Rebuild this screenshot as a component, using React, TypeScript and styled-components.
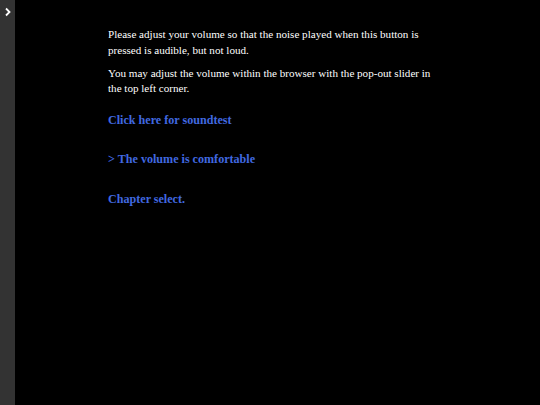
import styled, { createGlobalStyle } from "styled-components";

const GlobalStyle = createGlobalStyle`
  html, body {
    margin: 0;
    padding: 0;
    background: #000;
    height: 100%;
  }
  #root {
    height: 100%;
  }
`;

const Page = styled.div`
  display: flex;
  height: 405px;
  background: #000;
  overflow: hidden;
`;

const SideBar = styled.div`
  width: 15px;
  flex-shrink: 0;
  background: #333;
  display: flex;
  justify-content: center;
  padding-top: 3px;
  box-sizing: border-box;
`;

const Story = styled.div`
  flex: 1;
  display: flex;
  justify-content: center;
  padding-right: 15px;
`;

const Passage = styled.div`
  width: 324px;
  padding-top: 27px;
  font-family: "Liberation Serif", Georgia, serif;
  font-size: 11.1px;
  line-height: 15.5px;
  color: #fff;
`;

const Para = styled.p`
  margin: 0 0 7.5px;
`;

const Link = styled.a<{ $gap: number }>`
  display: block;
  margin-top: ${(p) => p.$gap}px;
  color: #4169e1;
  font-size: 12.1px;
  font-weight: bold;
  text-decoration: none;
  cursor: pointer;
`;

const Chevron = () => (
  <svg width="8" height="10" viewBox="0 0 8 10">
    <path d="M2 1.5 L5.5 5 L2 8.5" fill="none" stroke="#fff" strokeWidth="1.8" />
  </svg>
);

export default function App() {
  return (
    <>
      <GlobalStyle />
      <Page>
        <SideBar>
          <div>
            <Chevron />
          </div>
        </SideBar>
        <Story>
          <Passage>
            <Para>
              Please adjust your volume so that the noise played when this
              button is pressed is audible, but not loud.
            </Para>
            <Para>
              You may adjust the volume within the browser with the pop-out
              slider in the top left corner.
            </Para>
            <Link $gap={16}>Click here for soundtest</Link>
            <Link $gap={23.5}>&gt; The volume is comfortable</Link>
            <Link $gap={24.5}>Chapter select.</Link>
          </Passage>
        </Story>
      </Page>
    </>
  );
}
